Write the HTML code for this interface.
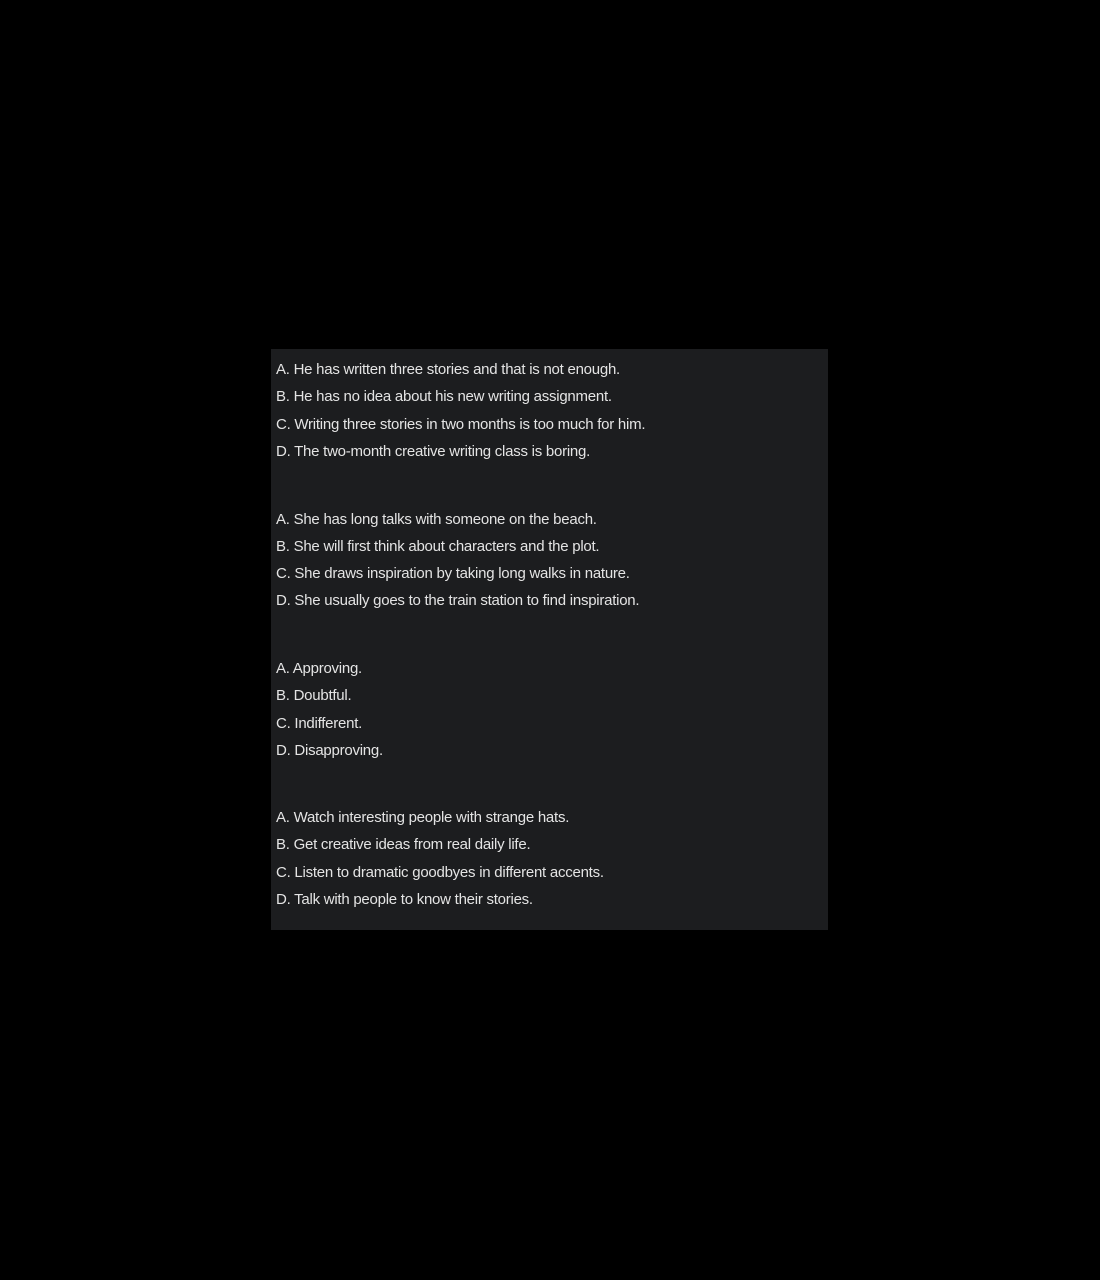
<!DOCTYPE html>
<html><head><meta charset="utf-8"><style>
html,body{margin:0;padding:0;background:#000;width:1100px;height:1280px;overflow:hidden}
.panel{position:absolute;left:271px;top:349px;width:557px;height:581px;background:#1c1d1f;font-family:"Liberation Sans",Arial,sans-serif;font-size:15px;color:#e4e4e4;letter-spacing:-0.25px}
.g{position:absolute;left:5px}
.g div{height:27.3px;line-height:27.3px;white-space:nowrap}
</style></head><body>
<div class="panel">
<div class="g" style="top:7px">
<div>A. He has written three stories and that is not enough.</div>
<div>B. He has no idea about his new writing assignment.</div>
<div>C. Writing three stories in two months is too much for him.</div>
<div>D. The two-month creative writing class is boring.</div>
</div>
<div class="g" style="top:156.5px">
<div>A. She has long talks with someone on the beach.</div>
<div>B. She will first think about characters and the plot.</div>
<div>C. She draws inspiration by taking long walks in nature.</div>
<div>D. She usually goes to the train station to find inspiration.</div>
</div>
<div class="g" style="top:306px">
<div>A. Approving.</div>
<div>B. Doubtful.</div>
<div>C. Indifferent.</div>
<div>D. Disapproving.</div>
</div>
<div class="g" style="top:455px">
<div>A. Watch interesting people with strange hats.</div>
<div>B. Get creative ideas from real daily life.</div>
<div>C. Listen to dramatic goodbyes in different accents.</div>
<div>D. Talk with people to know their stories.</div>
</div>
</div>
</body></html>
